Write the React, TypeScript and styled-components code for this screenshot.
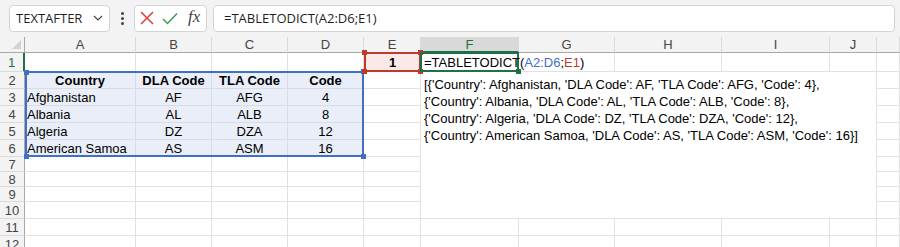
import React from "react";
import styled, { createGlobalStyle } from "styled-components";

const GlobalStyle = createGlobalStyle`
  html, body { margin: 0; padding: 0; background: #ffffff; }
  body { font-family: "Liberation Sans", Arial, sans-serif; overflow: hidden; }
  * { box-sizing: border-box; }
`;

const COLS = [25, 111, 76, 76, 76, 57, 98, 96, 107, 108, 47, 23];
const ROWS = [16, 19, 17, 17, 17, 17, 17, 15, 15, 15, 17, 17, 17];
const LETTERS = ["A", "B", "C", "D", "E", "F", "G", "H", "I", "J", ""];

const Page = styled.div`
  width: 900px;
  height: 247px;
  overflow: hidden;
  background: #ffffff;
`;

const TopBar = styled.div`
  height: 37px;
  background: #f3f3f3;
  display: flex;
  align-items: center;
  padding: 0 5px 1px 9px;
  gap: 6px;
  font-family: "Open Sans", "Noto Sans", sans-serif;
`;

const Box = styled.div<{ $w?: number; $grow?: boolean }>`
  height: 27px;
  background: #ffffff;
  border: 1px solid #d4d4d4;
  border-radius: 4px;
  display: flex;
  align-items: center;
  ${(p) => (p.$w ? `width: ${p.$w}px;` : "")}
  ${(p) => (p.$grow ? "flex: 1;" : "")}
`;

const NameText = styled.span`
  flex: 1;
  padding-left: 6px;
  font-size: 13px;
  color: #1f1f1f;
`;

const Chevron = styled.span`
  width: 22px;
  display: flex;
  justify-content: center;
`;

const Dots = styled.div`
  width: 12px;
  display: flex;
  flex-direction: column;
  align-items: center;
  gap: 2px;
  span {
    width: 3px;
    height: 3px;
    border-radius: 50%;
    background: #444;
  }
`;

const FxButtons = styled.div`
  display: flex;
  align-items: center;
  gap: 8px;
  padding-left: 5px;
`;

const FxText = styled.span`
  font-family: "Liberation Serif", "DejaVu Serif", serif;
  font-style: italic;
  font-size: 17px;
  color: #444;
  margin-left: 2px;
  margin-top: -3px;
`;

const FormulaText = styled.span`
  padding-left: 10px;
  font-size: 13px;
  color: #1f1f1f;
`;

const Sheet = styled.div`
  display: grid;
  grid-template-columns: ${COLS.map((c) => c + "px").join(" ")};
  grid-template-rows: ${ROWS.map((r) => r + "px").join(" ")};
  font-size: 13px;
  color: #000;
`;

const Cell = styled.div<{ $align?: string; $bold?: boolean; $fill?: boolean }>`
  border-right: 1px solid ${(p) => (p.$fill ? "#d7dce6" : "#e1e1e1")};
  border-bottom: 1px solid ${(p) => (p.$fill ? "#d7dce6" : "#e1e1e1")};
  background: ${(p) => (p.$fill ? "#e9eef8" : "transparent")};
  display: flex;
  align-items: center;
  justify-content: ${(p) => p.$align || "flex-start"};
  padding: 0 2px;
  white-space: nowrap;
  overflow: visible;
  font-weight: ${(p) => (p.$bold ? 700 : 400)};
  line-height: 1;
`;

const ColHead = styled.div<{ $active?: boolean }>`
  background: ${(p) => (p.$active ? "#d9d9d9" : "#f3f3f3")};
  border-right: 1px solid #dadada;
  border-bottom: ${(p) => (p.$active ? "2px solid #1e7145" : "1px solid #a8a8a8")};
  color: ${(p) => (p.$active ? "#1e7145" : "#444")};
  display: flex;
  align-items: center;
  justify-content: center;
  font-size: 13px;
`;

const RowHead = styled.div<{ $active?: boolean }>`
  background: #f3f3f3;
  border-right: ${(p) => (p.$active ? "2px solid #1e7145" : "1px solid #a8a8a8")};
  border-bottom: 1px solid #dadada;
  color: ${(p) => (p.$active ? "#1e7145" : "#444")};
  display: flex;
  align-items: center;
  justify-content: center;
  font-size: 13px;
`;

const Corner = styled.div`
  background: #f3f3f3;
  border-right: 1px solid #a8a8a8;
  border-bottom: 1px solid #a8a8a8;
  position: relative;
  &::after {
    content: "";
    position: absolute;
    right: 3px;
    bottom: 3px;
    width: 0;
    height: 0;
    border-left: 9px solid transparent;
    border-bottom: 9px solid #d2d2d2;
  }
`;

const Merged = styled.div`
  border-right: 1px solid #e1e1e1;
  border-bottom: 1px solid #e1e1e1;
  background: #fff;
  padding: 4px 0 0 3px;
  display: flex;
  flex-direction: column;
  white-space: nowrap;
`;

const ResultLine = styled.div`
  height: 17px;
  line-height: 17px;
`;

const Range = styled.div<{ $color: string; $fill?: string }>`
  border: 2px solid ${(p) => p.$color};
  background: ${(p) => p.$fill || "transparent"};
  position: relative;
  pointer-events: none;
  margin: -1px 0 0 0;
  z-index: 1;
  display: flex;
  align-items: center;
  justify-content: center;
`;

const Handle = styled.span<{ $color: string; $pos: string }>`
  position: absolute;
  width: 5px;
  height: 5px;
  background: ${(p) => p.$color};
  ${(p) => p.$pos}
`;

const EditCell = styled.div`
  border: 2px solid #1e7145;
  margin: -1px 0 0 -1px;
  z-index: 2;
  position: relative;
  display: flex;
  align-items: center;
  padding-left: 2px;
  white-space: nowrap;
`;

const Ref = styled.span<{ $c: string }>`
  color: ${(p) => p.$c};
`;

const ValueText = styled.span`
  font-weight: 700;
  color: #000;
`;

const at = (r: number, c: number, rs = 1, cs = 1): React.CSSProperties => ({
  gridRow: `${r} / span ${rs}`,
  gridColumn: `${c} / span ${cs}`,
});

const table = [
  ["Country", "DLA Code", "TLA Code", "Code"],
  ["Afghanistan", "AF", "AFG", "4"],
  ["Albania", "AL", "ALB", "8"],
  ["Algeria", "DZ", "DZA", "12"],
  ["American Samoa", "AS", "ASM", "16"],
];

const results = [
  "[{'Country': Afghanistan, 'DLA Code': AF, 'TLA Code': AFG, 'Code': 4},",
  "{'Country': Albania, 'DLA Code': AL, 'TLA Code': ALB, 'Code': 8},",
  "{'Country': Algeria, 'DLA Code': DZ, 'TLA Code': DZA, 'Code': 12},",
  "{'Country': American Samoa, 'DLA Code': AS, 'TLA Code': ASM, 'Code': 16}]",
];

const BLUE = "#3f6fc6";
const RED = "#c0392b";

export default function App() {
  const cells: React.ReactNode[] = [];
  cells.push(<Corner key="corner" style={at(1, 1)} />);
  LETTERS.forEach((l, i) => {
    cells.push(
      <ColHead key={"h" + i} style={at(1, i + 2)} $active={l === "F"}>
        {l}
      </ColHead>
    );
  });
  for (let r = 1; r <= 12; r++) {
    cells.push(
      <RowHead key={"r" + r} style={at(r + 1, 1)} $active={r === 1}>
        {r}
      </RowHead>
    );
  }
  for (let r = 1; r <= 12; r++) {
    for (let c = 1; c <= 11; c++) {
      const inMerged = r >= 2 && r <= 10 && c >= 6 && c <= 10;
      if (inMerged) continue;
      if (r === 1 && (c === 5 || c === 6)) continue;
      let content: React.ReactNode = null;
      let align = "flex-start";
      let bold = false;
      const inTable = r >= 2 && r <= 6 && c <= 4;
      if (inTable) {
        content = table[r - 2][c - 1];
        align = c === 1 && r > 2 ? "flex-start" : "center";
        bold = r === 2;
      }
      cells.push(
        <Cell
          key={`c${r}-${c}`}
          style={at(r + 1, c + 1)}
          $align={align}
          $bold={bold}
          $fill={inTable}
        >
          {content}
        </Cell>
      );
    }
  }

  return (
    <Page>
      <GlobalStyle />
      <TopBar>
        <Box $w={101}>
          <NameText>TEXTAFTER</NameText>
          <Chevron>
            <svg width="10" height="6" viewBox="0 0 10 6">
              <path d="M1 1 L5 5 L9 1" fill="none" stroke="#444" strokeWidth="1.2" />
            </svg>
          </Chevron>
        </Box>
        <Dots>
          <span />
          <span />
          <span />
        </Dots>
        <Box $w={73}>
          <FxButtons>
            <svg width="14" height="14" viewBox="0 0 14 14">
              <path d="M1 1 L13 13 M13 1 L1 13" stroke="#e0393e" strokeWidth="1.5" fill="none" />
            </svg>
            <svg width="16" height="13" viewBox="0 0 16 13">
              <path d="M1 7 L5.5 11.5 L15 1.5" stroke="#3c9c4c" strokeWidth="1.5" fill="none" />
            </svg>
            <FxText>fx</FxText>
          </FxButtons>
        </Box>
        <Box $grow>
          <FormulaText>=TABLETODICT(A2:D6;E1)</FormulaText>
        </Box>
      </TopBar>
      <Sheet>
        {cells}
        <Merged style={at(3, 7, 9, 5)}>
          {results.map((t, i) => (
            <ResultLine key={i}>{t}</ResultLine>
          ))}
        </Merged>
        <Range $color={BLUE} style={at(3, 2, 5, 4)}>
          <Handle $color={BLUE} $pos="left:-3px; top:-3px;" />
          <Handle $color={BLUE} $pos="right:-4px; top:-4px;" />
          <Handle $color={BLUE} $pos="left:-3px; bottom:-4px;" />
          <Handle $color={BLUE} $pos="right:-4px; bottom:-4px;" />
        </Range>
        <Range $color={RED} $fill="#fbe9e9" style={at(2, 6)}>
          <ValueText>1</ValueText>
          <Handle $color={RED} $pos="left:-4px; top:-4px;" />
          <Handle $color={RED} $pos="right:-4px; top:-4px;" />
          <Handle $color={RED} $pos="left:-4px; bottom:-4px;" />
          <Handle $color={RED} $pos="right:-4px; bottom:-4px;" />
        </Range>
        <EditCell style={at(2, 7)}>
          =TABLETODICT(<Ref $c={BLUE}>A2:D6</Ref>;<Ref $c={RED}>E1</Ref>)
          <Handle $color="#1e7145" $pos="right:-4px; bottom:-4px;" />
        </EditCell>
      </Sheet>
    </Page>
  );
}
